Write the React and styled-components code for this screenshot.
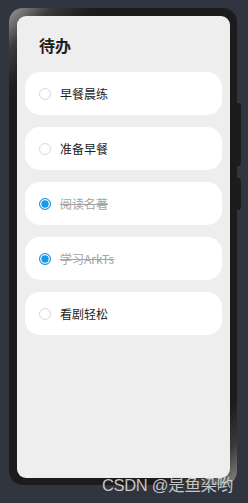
import styled, { createGlobalStyle } from "styled-components";

const GlobalStyle = createGlobalStyle`
    html, body {
        margin: 0;
        padding: 0;
        background: #30353f;
        font-family: "Noto Sans CJK SC", "Noto Sans", sans-serif;
    }
`;

const Page = styled.div`
    position: relative;
    width: 248px;
    height: 503px;
    padding: 8px 0 0 9px;
    box-sizing: border-box;
    overflow: hidden;
`;

const Frame = styled.div`
    position: relative;
    width: 228px;
    height: 477px;
    box-sizing: border-box;
    padding: 8px 7px 7px 8px;
    border-radius: 14px;
    background:
        linear-gradient(135deg, #9a9a9a 0%, #3a3a3a 6%, #1c1c1c 12%, #1c1c1c 88%, #3a3a3a 94%, #8a8a8a 100%);
    display: flex;
`;

const SideButton = styled.div`
    position: absolute;
    right: -4px;
    top: ${(p) => p.top}px;
    width: 4px;
    height: ${(p) => p.h}px;
    background: #1c1c1c;
    border-radius: 0 3px 3px 0;
`;

const Screen = styled.div`
    flex: 1;
    background: #eeeeee;
    border-radius: 9px;
    padding: 0 8px;
    display: flex;
    flex-direction: column;
`;

const Title = styled.h3`
    margin: 19px 0 17px 14px;
    font-size: 16px;
    line-height: 20px;
    font-weight: 700;
    color: #1f1f1f;
`;

const List = styled.div`
    display: flex;
    flex-direction: column;
    gap: 12px;
`;

const Item = styled.div`
    height: 43px;
    background: #ffffff;
    border-radius: 15px;
    display: flex;
    align-items: center;
    padding-left: 14px;
    gap: 9px;
`;

const Radio = styled.span`
    width: 12px;
    height: 12px;
    box-sizing: border-box;
    border-radius: 50%;
    flex-shrink: 0;
    border: ${(p) => (p.checked ? "1.5px solid #1a97e8" : "1px solid #d8d8d8")};
    background: ${(p) => (p.checked ? "#1a97e8" : "#ffffff")};
    box-shadow: ${(p) => (p.checked ? "inset 0 0 0 1.3px #ffffff" : "none")};
`;

const Label = styled.span`
    font-size: 12px;
    color: ${(p) => (p.done ? "#a3a3a3" : "#222222")};
    text-decoration: ${(p) => (p.done ? "line-through" : "none")};
`;

const Watermark = styled.div`
    position: absolute;
    right: 15px;
    bottom: 7px;
    font-family: "Liberation Sans", "Noto Sans CJK SC", sans-serif;
    font-size: 16.5px;
    color: rgba(225, 225, 225, 0.85);
    letter-spacing: -0.3px;
`;

const todos = [
    { name: "早餐晨练", done: false },
    { name: "准备早餐", done: false },
    { name: "阅读名著", done: true },
    { name: "学习ArkTs", done: true },
    { name: "看剧轻松", done: false },
];

const App = () => {
    return (
        <Page>
            <GlobalStyle />
            <Frame>
                <SideButton top={95} h={63} />
                <SideButton top={170} h={32} />
                <Screen>
                    <Title>待办</Title>
                    <List>
                        {todos.map((t) => (
                            <Item key={t.name}>
                                <Radio checked={t.done} />
                                <Label done={t.done}>{t.name}</Label>
                            </Item>
                        ))}
                    </List>
                </Screen>
            </Frame>
            <Watermark>CSDN @是鱼染哟</Watermark>
        </Page>
    );
};

export default App;
